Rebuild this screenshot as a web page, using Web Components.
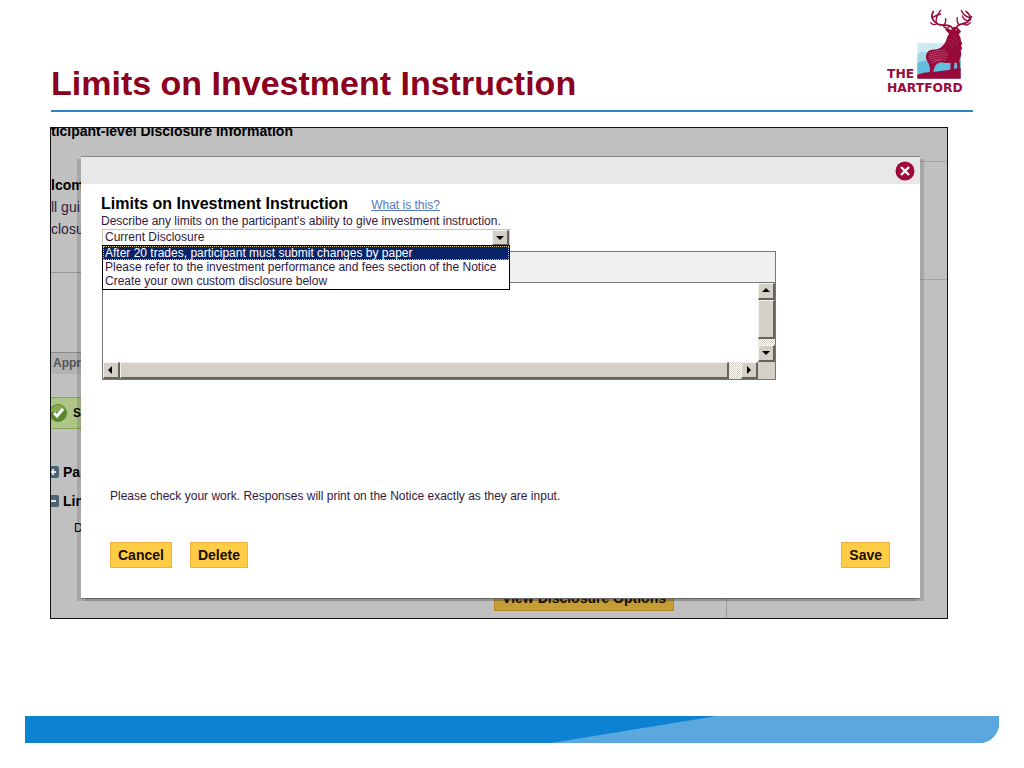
<!DOCTYPE html>
<html lang="en">
<head>
<meta charset="utf-8">
<title>Limits on Investment Instruction</title>
<style>
  body {
    margin: 0;
    background: #fff;
    font-family: "Liberation Sans", Arial, sans-serif;
  }
</style>
</head>
<body>
<slide-page>
  <slide-header slot="header">Limits on Investment Instruction</slide-header>
  <app-stage>
    <disclosure-page slot="page"></disclosure-page>
    <modal-dialog slot="modal">
      <disclosure-form></disclosure-form>
    </modal-dialog>
  </app-stage>
  <slide-footer slot="footer"></slide-footer>
</slide-page>

<script>
// Base class: opens the shadow root and fills it with the markup
class BaseElement extends HTMLElement {
  constructor() {
    super();
    this.attachShadow({ mode: 'open' });
    this.shadowRoot.innerHTML = this.render();
  }
}

// Whole slide: header, content, footer
class SlidePage extends BaseElement {
  render() {
    return `
      <style>
        :host {
          display: flex;
          flex-direction: column;
          min-height: 100vh;
        }
        main {
          padding: 15px 76px 0 50px;
        }
        .footer {
          margin-top: auto;
          padding: 24px 25px 25px;
        }
      </style>
      <slot name="header"></slot>
      <main><slot></slot></main>
      <div class="footer"><slot name="footer"></slot></div>
    `;
  }
}
customElements.define('slide-page', SlidePage);

// Stag logo
class HartfordLogo extends BaseElement {
  render() {
    return `
      <style>
        :host {
          display: block;
        }
        svg {
          display: block;
        }
        text {
          font: bold 37px "DejaVu Sans", sans-serif;
          fill: #980a3a;
        }
      </style>
      <svg width="86" height="88" viewBox="53 24 258 264" role="img" aria-label="The Hartford">
        <rect x="144" y="129" width="130" height="106" fill="#cfe9f2"/>
        <path d="M144 162 Q158 150 174 158 T215 150 L274 146 V235 H144Z" fill="#a5d8ea"/>
        <path d="M144 190 Q160 178 180 184 T274 178 V235 H144Z" fill="#62bddf"/>
        <path d="M144 224 Q162 216 184 216 Q226 213 249 207 L274 203 V236 H144Z" fill="#980a3a"/>
        <path fill="#980a3a" d="M170 166 Q173 151 188 149 Q205 149 214 143 Q226 135 231 120 Q234 108 239 101
          L231 93 L227 85 L239 87 L246 90 Q249 80 257 80 Q264 80 267 85 L275 94 L272 100 L268 102
          Q275 113 275 124 L279 130 L275 137 L279 145 L274 152 Q278 160 274 170
          L270 182 L272 193 L271 209 L264 209 L263 190 L256 187 L253 212 L244 212 L243 188
          Q229 190 216 187 Q202 188 196 201 L191 217 L181 218 L182 204 Q179 190 173 182 Q168 174 170 166Z"/>
        <g fill="none" stroke="#980a3a" stroke-linecap="round" stroke-width="5">
          <path d="M249 85 C244 69 218 80 205 72 C190 64 182 50 192 34"/>
          <path d="M189 53 Q200 45 214 42 M201 69 Q197 52 214 31" stroke-width="4"/>
          <path d="M201 72 Q191 77 184 68 M224 76 Q230 70 229 56 M240 77 Q239 90 223 80" stroke-width="4"/>
          <path d="M262 83 C264 68 285 75 296 65 C309 51 300 42 290 34"/>
          <path d="M301 53 Q285 50 276 32 M298 63 Q283 61 279 48 M302 61 L307 49" stroke-width="4"/>
          <path d="M270 75 Q261 67 264 53 M283 72 Q293 80 303 68" stroke-width="4"/>
        </g>
        <g fill="none" stroke="#e3b9cb" stroke-width="2" stroke-dasharray="3 3">
          <path d="M182 159 Q203 151 226 151 M179 165 Q205 157 235 158 M178 171 Q207 163 236 165"/>
          <path d="M181 177 Q207 168 233 173 M184 183 Q207 174 230 180 M188 190 Q198 182 213 181"/>
          <path d="M243 118 L263 135 M239 127 L253 141 M251 106 L270 129" stroke-width="1"/>
        </g>
        <circle cx="261" cy="89" r="2" fill="#e3b9cb"/>
        <text x="53" y="235">THE</text>
        <text x="53" y="277">HARTFORD</text>
      </svg>
    `;
  }
}
customElements.define('hartford-logo', HartfordLogo);

class SlideHeader extends BaseElement {
  render() {
    return `
      <style>
        header {
          display: flex;
          justify-content: space-between;
          align-items: flex-end;
          margin: 0 51px;
          padding-top: 8px;
          border-bottom: 2px solid #2c86c8;
        }
        h1 {
          margin: 0 0 7px;
          font-size: 34px;
          line-height: 40px;
          color: #8c0020;
        }
        hartford-logo {
          margin-bottom: 14px;
        }
      </style>
      <header>
        <h1><slot></slot></h1>
        <hartford-logo></hartford-logo>
      </header>
    `;
  }
}
customElements.define('slide-header', SlideHeader);

// Two tone bar at the bottom
class SlideFooter extends BaseElement {
  render() {
    return `
      <style>
        footer {
          height: 27px;
          background: #0d82d3;
          border-bottom-right-radius: 20px;
          overflow: hidden;
        }
        .light {
          height: 100%;
          background: #5aa8de;
          clip-path: polygon(71% 0, 100% 0, 100% 100%, 54% 100%);
        }
      </style>
      <footer><div class="light"></div></footer>
    `;
  }
}
customElements.define('slide-footer', SlideFooter);

// Frame with the dimmed page and the dialog stacked in one grid cell
class AppStage extends BaseElement {
  render() {
    return `
      <style>
        :host {
          display: grid;
          border: 1px solid #111;
          background: #c0c0c0;
          overflow: hidden;
        }
        ::slotted(*) {
          grid-area: 1 / 1;
          min-width: 0;
        }
        ::slotted([slot="modal"]) {
          margin: 28px 27px 20px 30px;
        }
      </style>
      <slot name="page"></slot>
      <slot name="modal"></slot>
    `;
  }
}
customElements.define('app-stage', AppStage);

class GoldButton extends BaseElement {
  render() {
    return `
      <style>
        :host {
          display: block;
        }
        button {
          display: block;
          padding: 0 7px;
          border: 1px solid #eeb040;
          background: #ffcd45;
          color: #1a0d00;
          font: bold 14px/24px "Liberation Sans", Arial, sans-serif;
          white-space: nowrap;
        }
        :host([dimmed]) button {
          border-color: #b8892c;
          background: #c69d35;
        }
      </style>
      <button type="button"><slot></slot></button>
    `;
  }
}
customElements.define('gold-button', GoldButton);

// Page behind the dialog
class DisclosurePage extends BaseElement {
  render() {
    return `
      <style>
        :host {
          display: grid;
          grid-template-columns: 30px 1fr 27px;
          grid-template-rows: auto 1fr;
          font-size: 14px;
          color: #000;
          white-space: nowrap;
        }
        h2 {
          grid-column: 1 / -1;
          margin: -5px 0 0;
          font-size: 14px;
          line-height: 16px;
        }
        h3, p {
          margin: 0;
          font-size: 14px;
          line-height: 22px;
        }
        p {
          color: #301c38;
        }
        .welcome {
          padding: 35px 0 32px;
          border-bottom: 1px solid #999;
        }
        .tab {
          margin: 79px 0 23px;
          padding-left: 2px;
          border-top: 1px solid #888;
          background: #b2b2b2;
          color: #555;
          font-size: 12px;
          font-weight: bold;
          line-height: 21px;
        }
        .status {
          display: flex;
          align-items: center;
          gap: 5px;
          height: 30px;
          margin-bottom: 28px;
          border: solid #86a357;
          border-width: 1px 0;
          background: #afc588;
          font-size: 12px;
          font-weight: bold;
        }
        .item {
          display: flex;
          align-items: center;
          gap: 4px;
          height: 29px;
          font-weight: bold;
        }
        .sub {
          padding-left: 23px;
          font-size: 12px;
          line-height: 26px;
        }
        svg {
          flex: none;
        }
        .bottom {
          display: flex;
          justify-content: flex-end;
          align-items: flex-end;
        }
        .bottom gold-button {
          margin: 0 52px 7px 0;
        }
        .panel {
          width: 193px;
          height: 40px;
          border-left: 1px solid #999;
        }
        .rail {
          height: 117px;
          margin-top: 22px;
          border: solid #aaa58f;
          border-width: 1px 0;
        }
      </style>
      <h2>ticipant-level Disclosure Information</h2>
      <div>
        <div class="welcome">
          <h3>lcom</h3>
          <p>ll gui</p>
          <p>closu</p>
        </div>
        <div class="tab">Appr</div>
        <div class="status">
          <svg width="17" height="20" viewBox="3 0 17 20">
            <circle cx="10" cy="10" r="9" fill="#57882a"/>
            <path d="M3 6 Q10 -2 17 6 Q13 10 3 9Z" fill="#85ab57"/>
            <path d="M6 10 L9 13 L15 6" fill="none" stroke="#fff" stroke-width="3"/>
          </svg>
          <span>S</span>
        </div>
        <div class="item">
          <svg width="8" height="12" viewBox="4 0 8 12">
            <rect width="12" height="12" rx="2" fill="#4e6478"/>
            <path d="M3 6H9M6 3V9" stroke="#e4eaf0" stroke-width="2"/>
          </svg>
          <span>Pa</span>
        </div>
        <div class="item">
          <svg width="8" height="12" viewBox="4 0 8 12">
            <rect width="12" height="12" rx="2" fill="#4e6478"/>
            <path d="M3 6H9" stroke="#e4eaf0" stroke-width="2"/>
          </svg>
          <span>Lin</span>
        </div>
        <div class="sub">D</div>
      </div>
      <div class="bottom">
        <gold-button dimmed>View Disclosure Options</gold-button>
        <div class="panel"></div>
      </div>
      <div class="rail"></div>
    `;
  }
}
customElements.define('disclosure-page', DisclosurePage);

class ModalDialog extends BaseElement {
  render() {
    return `
      <style>
        :host {
          display: flex;
          flex-direction: column;
          position: relative;
          background: #fff;
          border-top: 1px solid #888;
          box-shadow: 4px 3px 0 rgba(0, 0, 0, .13), -4px 3px 0 rgba(0, 0, 0, .13), 0 1px 0 #888;
        }
        .bar {
          display: flex;
          justify-content: flex-end;
          align-items: center;
          height: 27px;
          padding-right: 5px;
          background: #e8e8e8;
        }
        button {
          display: block;
          padding: 0;
          border: 0;
          background: none;
        }
        svg {
          display: block;
        }
      </style>
      <div class="bar">
        <button type="button" aria-label="Close">
          <svg width="20" height="20" viewBox="0 0 20 20">
            <circle cx="10" cy="10" r="9.5" fill="#a00a3a"/>
            <path d="M6 6L14 14M14 6L6 14" stroke="#fff" stroke-width="2.4"/>
          </svg>
        </button>
      </div>
      <slot></slot>
    `;
  }
}
customElements.define('modal-dialog', ModalDialog);

// Classic raised button with an arrow, used by the drop-down and the scroll bars
class ArrowButton extends BaseElement {
  render() {
    const points = {
      up: '4,9 8,5 12,9',
      down: '4,6 12,6 8,10',
      left: '9,4 5,8 9,12',
      right: '6,4 10,8 6,12'
    };
    return `
      <style>
        :host {
          display: block;
          box-sizing: border-box;
          width: 17px;
          height: 17px;
          border: solid;
          border-width: 1px 2px 2px 1px;
          border-color: #f4f3ee #66625e #66625e #f4f3ee;
          background: #d4d0c8;
        }
        button {
          display: grid;
          place-items: center;
          width: 100%;
          height: 100%;
          padding: 0;
          border: 0;
          background: none;
        }
      </style>
      <button type="button" tabindex="-1" aria-label="${this.getAttribute('dir-to')}">
        <svg width="14" height="14" viewBox="1 1 14 14"><polygon points="${points[this.getAttribute('dir-to')]}"/></svg>
      </button>
    `;
  }
}
customElements.define('arrow-button', ArrowButton);

// Drop-down shown with its list open
class OpenSelect extends BaseElement {
  render() {
    return `
      <style>
        :host {
          display: block;
          position: relative;
          width: 408px;
          font-size: 12px;
          color: #32183c;
        }
        .box {
          display: flex;
          height: 15px;
          border: 1px solid #c9c5b8;
          border-bottom: 0;
          background: #fff;
        }
        select {
          flex: 1;
          min-width: 0;
          padding: 0 2px;
          border: 0;
          appearance: none;
          background: none;
          color: inherit;
          font: 12px/15px "Liberation Sans", Arial, sans-serif;
        }
        arrow-button {
          height: 16px;
        }
        ul {
          position: absolute;
          top: 100%;
          left: 0;
          right: 0;
          z-index: 1;
          margin: 0;
          padding: 0 0 1px;
          border: 1px solid #000;
          background: #fff;
          list-style: none;
        }
        li {
          padding: 0 2px;
          line-height: 14px;
        }
        li[aria-selected] {
          background: #0a246a;
          color: #fff;
          outline: 1px dotted #d8c890;
          outline-offset: -1px;
        }
      </style>
      <div class="box">
        <select id="disclosure" aria-label="Current Disclosure"><option>Current Disclosure</option></select>
        <arrow-button dir-to="down"></arrow-button>
      </div>
      <ul role="listbox" aria-label="Disclosures">
        <li role="option" aria-selected="true">After 20 trades, participant must submit changes by paper</li>
        <li role="option">Please refer to the investment performance and fees section of the Notice</li>
        <li role="option">Create your own custom disclosure below</li>
      </ul>
    `;
  }
}
customElements.define('open-select', OpenSelect);

// Text editor with a toolbar and two scroll bars
class TextEditor extends BaseElement {
  render() {
    return `
      <style>
        :host {
          display: block;
          border: 1px solid #777;
        }
        .toolbar {
          height: 30px;
          border-bottom: 1px solid #777;
          background: #f0f0f0;
        }
        .area {
          display: grid;
          grid-template-columns: 1fr 17px;
          grid-template-rows: 79px 17px;
        }
        textarea {
          display: block;
          box-sizing: border-box;
          width: 100%;
          height: 100%;
          padding: 2px;
          border: 0;
          resize: none;
          overflow: hidden;
          font: 12px "Liberation Sans", Arial, sans-serif;
        }
        .bar {
          display: flex;
          background: repeating-conic-gradient(#d4d0c8 0 25%, #fff 0 50%) 0 0 / 2px 2px;
        }
        .vertical {
          flex-direction: column;
        }
        .thumb {
          flex: 1;
          border: solid;
          border-width: 1px 2px 2px 1px;
          border-color: #f4f3ee #66625e #66625e #f4f3ee;
          background: #d4d0c8;
        }
        .vertical .thumb {
          margin-bottom: 6px;
        }
        .horizontal .thumb {
          margin-right: 12px;
        }
        .corner {
          background: #d4d0c8;
        }
      </style>
      <div class="toolbar"></div>
      <div class="area">
        <textarea aria-label="Custom disclosure"></textarea>
        <div class="bar vertical">
          <arrow-button dir-to="up"></arrow-button>
          <div class="thumb"></div>
          <arrow-button dir-to="down"></arrow-button>
        </div>
        <div class="bar horizontal">
          <arrow-button dir-to="left"></arrow-button>
          <div class="thumb"></div>
          <arrow-button dir-to="right"></arrow-button>
        </div>
        <div class="corner"></div>
      </div>
    `;
  }
}
customElements.define('text-editor', TextEditor);

class DisclosureForm extends BaseElement {
  render() {
    return `
      <style>
        :host {
          display: block;
          padding: 11px 30px 30px 20px;
          font-size: 12px;
          color: #32183c;
        }
        .heading {
          display: flex;
          align-items: baseline;
          gap: 23px;
        }
        h2 {
          margin: 0;
          font-size: 16px;
          line-height: 18px;
          color: #000;
        }
        a {
          color: #5577c4;
        }
        p {
          margin: 0;
          line-height: 16px;
        }
        open-select {
          margin-left: 1px;
        }
        text-editor {
          margin: 6px 114px 108px 1px;
        }
        .check, .actions {
          margin-left: 9px;
        }
        .actions {
          display: flex;
          gap: 18px;
          margin-top: 38px;
        }
        .save {
          margin-left: auto;
        }
      </style>
      <div class="heading">
        <h2>Limits on Investment Instruction</h2>
        <a href="#">What is this?</a>
      </div>
      <p>Describe any limits on the participant's ability to give investment instruction.</p>
      <open-select></open-select>
      <text-editor></text-editor>
      <p class="check">Please check your work. Responses will print on the Notice exactly as they are input.</p>
      <div class="actions">
        <gold-button>Cancel</gold-button>
        <gold-button>Delete</gold-button>
        <gold-button class="save">Save</gold-button>
      </div>
    `;
  }
}
customElements.define('disclosure-form', DisclosureForm);
</script>
</body>
</html>
